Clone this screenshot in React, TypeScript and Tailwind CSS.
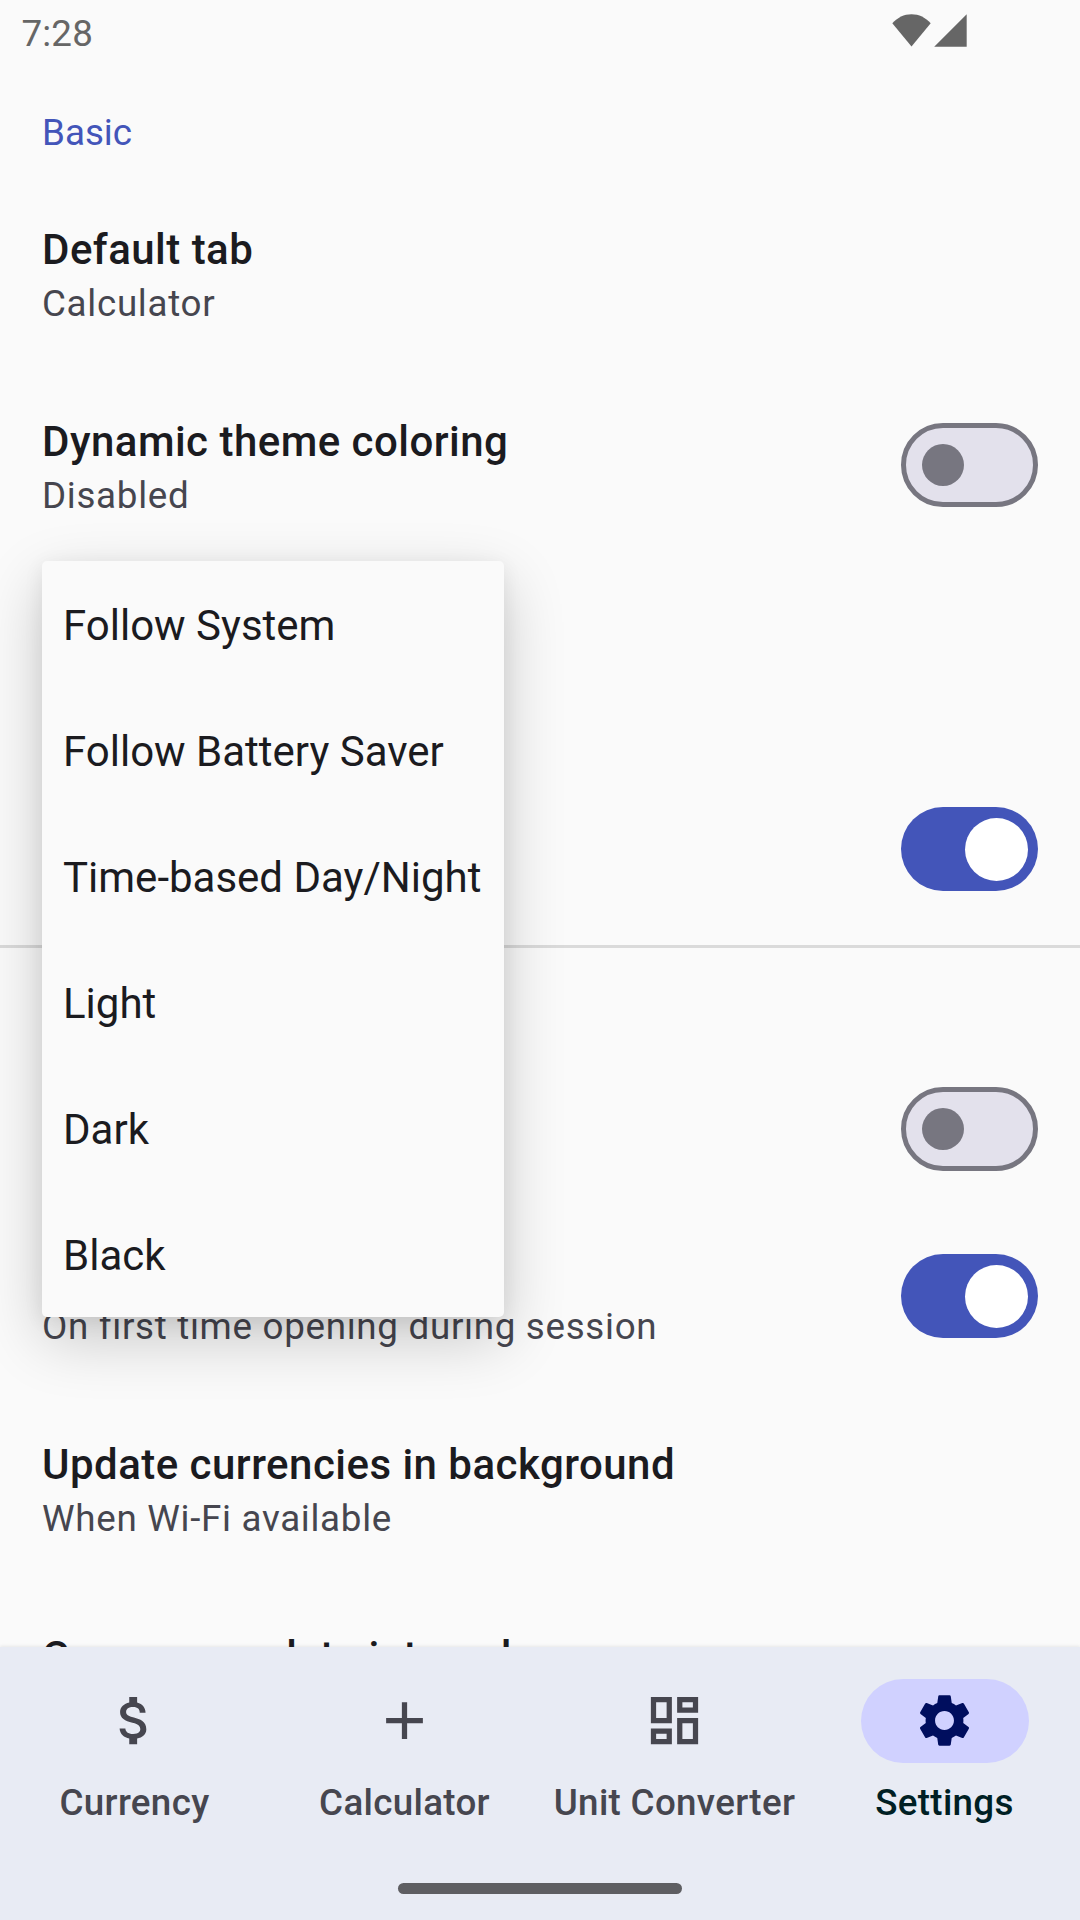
import React from "react";
import { MdAdd, MdAttachMoney, MdOutlineDashboard, MdSettings } from "react-icons/md";

function Toggle({ on }: { on?: boolean }) {
  return on ? (
    <div className="flex h-[84px] w-[137px] shrink-0 items-center justify-end rounded-full bg-[#4355b9] pr-[10px]">
      <div className="size-[63px] rounded-full bg-white" />
    </div>
  ) : (
    <div className="flex h-[84px] w-[137px] shrink-0 items-center rounded-full border-[5px] border-[#777680] bg-[#e3e1ec] pl-[16px]">
      <div className="size-[42px] rounded-full bg-[#777680]" />
    </div>
  );
}

type RowProps = { title?: string; sub?: string; toggle?: "on" | "off"; className: string };

function Row({ title, sub, toggle, className }: RowProps) {
  return (
    <div className={`flex shrink-0 items-center justify-between px-[42px] ${className}`}>
      <div className="pt-[4px] whitespace-nowrap">
        {title && <div className="h-[58px] text-[42px] leading-[58px] font-medium tracking-[0.47px] text-[#1b1b1f]">{title}</div>}
        {sub && <div className="h-[50px] text-[36.75px] leading-[50px] tracking-[0.7px] text-[#46464f]">{sub}</div>}
      </div>
      {toggle && <Toggle on={toggle === "on"} />}
    </div>
  );
}

const options = ["Follow System", "Follow Battery Saver", "Time-based Day/Night", "Light", "Dark", "Black"];

const tabs = [
  { label: "Currency", Icon: MdAttachMoney },
  { label: "Calculator", Icon: MdAdd },
  { label: "Unit Converter", Icon: MdOutlineDashboard },
  { label: "Settings", Icon: MdSettings, active: true },
];

export default function App() {
  return (
    <div className="relative flex h-[1920px] w-[1080px] flex-col overflow-hidden bg-[#fafafa] font-['Roboto',sans-serif]">
      <header className="flex h-[63px] shrink-0 items-start justify-between pr-[113px] pl-[21.5px] text-[#666666]">
        <span className="pt-[9px] text-[36.75px] leading-[50px] tracking-[0.15px]">7:28</span>
        <div className="flex gap-[3px] pt-[14px]">
          <svg width="39" height="33" viewBox="0 0 39 33" fill="currentColor">
            <path d="M19.5 32.5L0.3 9.2C5.5 3.5 12 0.2 19.5 0.2S33.5 3.5 38.7 9.2Z" />
          </svg>
          <svg width="33" height="33" viewBox="0 0 33 33" fill="currentColor">
            <path d="M0.2 32.7H32.7V0.2Z" />
          </svg>
        </div>
      </header>

      <main className="flex min-h-0 flex-1 flex-col overflow-hidden">
        <div className="h-[114px] shrink-0 px-[42px] pt-[45px] text-[36.75px] leading-[50px] text-[#4355b9]">Basic</div>
        <Row title="Default tab" sub="Calculator" className="h-[192px]" />
        <Row title="Dynamic theme coloring" sub="Disabled" toggle="off" className="h-[192px]" />
        <Row className="h-[192px]" />
        <Row toggle="on" className="h-[192px]" />
        <hr className="h-[3px] shrink-0 border-0 bg-[#dadada]" />
        <Row className="h-[97px]" />
        <Row toggle="off" className="h-[168px]" />
        <div className="flex h-[166px] shrink-0 items-center justify-between px-[42px]">
          <div className="pt-[62px] text-[36.75px] leading-[50px] tracking-[0.7px] whitespace-nowrap text-[#46464f]">
            On first time opening during session
          </div>
          <Toggle on />
        </div>
        <Row title="Update currencies in background" sub="When Wi-Fi available" className="mt-[13px] h-[192px]" />
        <div className="shrink-0 px-[42px] pt-[44px] text-[42px] leading-[58px] font-medium tracking-[0.47px] text-[#1b1b1f]">
          Currency update interval
        </div>
      </main>

      <nav className="h-[273px] shrink-0 bg-[#e8ebf4] shadow-[0_-1px_3px_rgba(0,0,0,0.08)]">
        <div className="grid h-[236px] grid-cols-4 pt-[32px]">
          {tabs.map(({ label, Icon, active }) => (
            <div key={label} className="flex flex-col items-center">
              <div
                className={`flex h-[84px] w-[168px] items-center justify-center rounded-full pr-[1px] pb-[1px] ${active ? "bg-[#d0d1ff] text-[#000e5e]" : "text-[#46464f]"}`}
              >
                <Icon className="size-[63px]" />
              </div>
              <div
                className={`mt-[15px] pr-[1px] text-[36.75px] leading-[50px] font-medium tracking-[0.32px] whitespace-nowrap ${active ? "text-[#001f24]" : "text-[#46464f]"}`}
              >
                {label}
              </div>
            </div>
          ))}
        </div>
        <div className="mx-auto h-[11px] w-[284px] rounded-full bg-[#5e5e62]" />
      </nav>

      <div className="absolute top-[561px] left-[42px] w-[462px] rounded-[5px] bg-[#fafafa] shadow-[0_22px_62px_rgba(0,0,0,0.2),0_4px_20px_rgba(0,0,0,0.07)]">
        {options.map((o) => (
          <div key={o} className="flex h-[126px] items-center pt-[2px] pl-[21px] text-[42px] whitespace-nowrap text-[#1b1b1f]">
            {o}
          </div>
        ))}
      </div>
    </div>
  );
}
